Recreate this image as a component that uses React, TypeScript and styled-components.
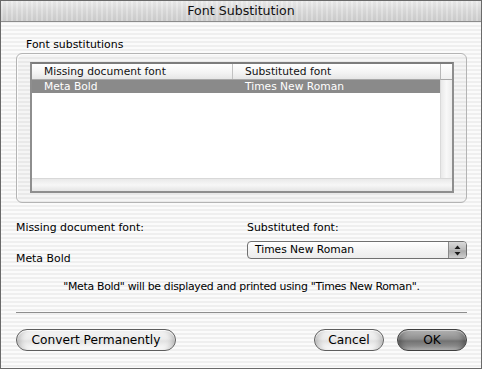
import React from "react";
import styled, { createGlobalStyle } from "styled-components";

const Global = createGlobalStyle`
  html, body { margin: 0; padding: 0; background: #ffffff; }
  body { font-family: "DejaVu Sans", "Liberation Sans", sans-serif; color: #000; }
`;

const Window = styled.div`
  width: 482px;
  height: 369px;
  box-sizing: border-box;
  border: 1px solid #6a6a6a;
  display: flex;
  flex-direction: column;
  background: repeating-linear-gradient(to bottom, #efefef 0px, #efefef 2px, #fbfbfb 2px, #fbfbfb 4px);
  overflow: hidden;
`;

const TitleBar = styled.div`
  height: 20px;
  flex: none;
  border-bottom: 1px solid #8c8c8c;
  background:
    repeating-linear-gradient(to right, rgba(255,255,255,0.18) 0px, rgba(255,255,255,0.18) 2px, rgba(0,0,0,0.02) 2px, rgba(0,0,0,0.02) 5px),
    linear-gradient(to bottom, #ececec 0%, #dadada 50%, #cdcdcd 100%);
  display: flex;
  align-items: center;
  justify-content: center;
  font-size: 12.6px;
  line-height: 20px;
  color: #111;
`;

const Body = styled.div`
  flex: 1;
  display: flex;
  flex-direction: column;
  padding: 0 14px 0 15px;
`;

const SmallText = styled.div`
  font-size: 10.9px;
  line-height: 13px;
  white-space: nowrap;
`;

const GroupLabel = styled(SmallText)`
  margin-top: 16px;
  padding-left: 10px;
`;

const GroupBox = styled.div`
  margin-top: 2px;
  border: 1px solid #b4b4b4;
  border-radius: 6px;
  padding: 8px 12px 9px 13px;
  background: rgba(0, 0, 0, 0.025);
  box-shadow: inset 1px 1px 0 rgba(255,255,255,0.8);
`;

const Table = styled.div`
  height: 131px;
  box-sizing: border-box;
  border: 2px solid #8e8e8e;
  border-top-color: #7c7c7c;
  background: #ffffff;
  display: flex;
  flex-direction: column;
`;

const TableMain = styled.div`
  flex: 1;
  display: flex;
  min-height: 0;
`;

const List = styled.div`
  flex: 1;
  display: flex;
  flex-direction: column;
`;

const HeaderRow = styled.div`
  height: 15px;
  display: flex;
  border-bottom: 1px solid #a8a8a8;
  background: linear-gradient(to bottom, #ffffff 0%, #f3f3f3 60%, #e6e6e6 100%);
`;

const HeaderCell = styled.div<{ $w?: number }>`
  ${(p) => (p.$w ? `width: ${p.$w}px; flex: none; border-right: 1px solid #c2c2c2;` : "flex: 1;")}
  padding-left: 12px;
  font-size: 10.7px;
  line-height: 15px;
  color: #111;
  white-space: nowrap;
  overflow: hidden;
`;

const DataRow = styled.div<{ $selected?: boolean }>`
  height: 13px;
  display: flex;
  background: ${(p) => (p.$selected ? "#8a8a8a" : "transparent")};
  color: ${(p) => (p.$selected ? "#ffffff" : "#000")};
`;

const DataCell = styled.div<{ $w?: number }>`
  ${(p) => (p.$w ? `width: ${p.$w + 1}px; flex: none;` : "flex: 1;")}
  padding-left: 12px;
  box-sizing: border-box;
  font-size: 10.7px;
  line-height: 13px;
  white-space: nowrap;
`;

const VScroll = styled.div`
  width: 12px;
  flex: none;
  display: flex;
  flex-direction: column;
`;

const Corner = styled.div`
  height: 15px;
  border-bottom: 1px solid #a8a8a8;
  border-left: 1px solid #b8b8b8;
  background: linear-gradient(to bottom, #ffffff 0%, #f0f0f0 100%);
`;

const VTrack = styled.div`
  flex: 1;
  border-left: 1px solid #dadada;
  background: linear-gradient(to right, #e9e9e9 0%, #f8f8f8 50%, #ececec 100%);
`;

const HScroll = styled.div`
  height: 12px;
  flex: none;
  border-top: 1px solid #d8d8d8;
  background: linear-gradient(to bottom, #e9e9e9 0%, #f7f7f7 50%, #e4e4e4 100%);
`;

const Fields = styled.div`
  margin-top: 18px;
  display: grid;
  grid-template-columns: 231px 1fr;
`;

const FieldCol = styled.div`
  display: flex;
  flex-direction: column;
`;

const Value = styled(SmallText)`
  margin-top: 18px;
`;

const Popup = styled.div`
  margin-top: 7px;
  height: 18px;
  box-sizing: border-box;
  border: 1px solid #707070;
  border-radius: 4px;
  display: flex;
  background: linear-gradient(to bottom, #ffffff 0%, #f4f4f4 50%, #ececec 100%);
  box-shadow: inset 0 1px 0 #ffffff;
  overflow: hidden;
`;

const PopupText = styled.div`
  flex: 1;
  padding-left: 7px;
  font-size: 10.7px;
  line-height: 16px;
  white-space: nowrap;
`;

const PopupArrows = styled.div`
  width: 17px;
  flex: none;
  border-left: 1px solid #8a8a8a;
  background: linear-gradient(to bottom, #d9d9d9 0%, #b9b9b9 50%, #a9a9a9 55%, #cfcfcf 100%);
  display: flex;
  align-items: center;
  justify-content: center;
`;

const Message = styled(SmallText)`
  margin-top: 15px;
  text-align: center;
  letter-spacing: -0.3px;
`;

const Separator = styled.div`
  margin-top: 19px;
  height: 1px;
  background: #8e8e8e;
`;

const ButtonRow = styled.div`
  margin-top: 16px;
  display: flex;
  align-items: center;
  gap: 13px;
`;

const Spacer = styled.div`
  flex: 1;
`;

const AquaButton = styled.button<{ $w: number; $default?: boolean }>`
  width: ${(p) => p.$w}px;
  height: 22px;
  box-sizing: border-box;
  margin: 0;
  padding: 0;
  border-radius: 11px;
  border: 1px solid ${(p) => (p.$default ? "#3f3f3f" : "#5e5e5e")};
  font-family: "DejaVu Sans", "Liberation Sans", sans-serif;
  font-size: 12.2px;
  line-height: 20px;
  color: #000;
  background: ${(p) =>
    p.$default
      ? "linear-gradient(to bottom, #b4b4b4 0%, #8e8e8e 45%, #727272 55%, #8a8a8a 80%, #b8b8b8 100%)"
      : "linear-gradient(to bottom, #f4f4f4 0%, #ececec 45%, #e2e2e2 55%, #f2f2f2 80%, #ffffff 100%)"};
  box-shadow: ${(p) =>
    p.$default
      ? "inset 0 1px 1px rgba(255,255,255,0.5), inset 6px 0 6px -4px rgba(0,0,0,0.35), inset -6px 0 6px -4px rgba(0,0,0,0.35)"
      : "inset 0 1px 1px rgba(255,255,255,0.9), inset 6px 0 6px -4px rgba(0,0,0,0.25), inset -6px 0 6px -4px rgba(0,0,0,0.25)"};
  white-space: nowrap;
`;

const COL1 = 200;

export default function App() {
  return (
    <>
      <Global />
      <Window>
        <TitleBar>Font Substitution</TitleBar>
        <Body>
          <GroupLabel>Font substitutions</GroupLabel>
          <GroupBox>
            <Table>
              <TableMain>
                <List>
                  <HeaderRow>
                    <HeaderCell $w={COL1 - 12}>Missing document font</HeaderCell>
                    <HeaderCell>Substituted font</HeaderCell>
                  </HeaderRow>
                  <DataRow $selected>
                    <DataCell $w={COL1}>Meta Bold</DataCell>
                    <DataCell>Times New Roman</DataCell>
                  </DataRow>
                </List>
                <VScroll>
                  <Corner />
                  <VTrack />
                </VScroll>
              </TableMain>
              <HScroll />
            </Table>
          </GroupBox>
          <Fields>
            <FieldCol>
              <SmallText>Missing document font:</SmallText>
              <Value>Meta Bold</Value>
            </FieldCol>
            <FieldCol>
              <SmallText>Substituted font:</SmallText>
              <Popup>
                <PopupText>Times New Roman</PopupText>
                <PopupArrows>
                  <svg width="7" height="11" viewBox="0 0 7 11">
                    <path d="M3.5 0.5 L6.5 4 L0.5 4 Z" fill="#1a1a1a" />
                    <path d="M0.5 7 L6.5 7 L3.5 10.5 Z" fill="#1a1a1a" />
                  </svg>
                </PopupArrows>
              </Popup>
            </FieldCol>
          </Fields>
          <Message>"Meta Bold" will be displayed and printed using "Times New Roman".</Message>
          <Separator />
          <ButtonRow>
            <AquaButton $w={160}>Convert Permanently</AquaButton>
            <Spacer />
            <AquaButton $w={70}>Cancel</AquaButton>
            <AquaButton $w={70} $default>
              OK
            </AquaButton>
          </ButtonRow>
        </Body>
      </Window>
    </>
  );
}
